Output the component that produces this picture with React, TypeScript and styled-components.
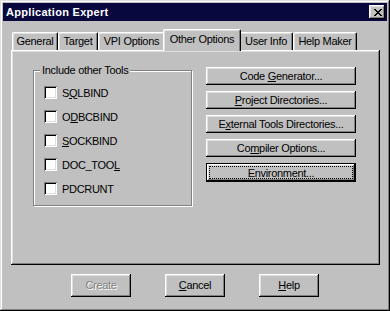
import React from "react";
import styled, { createGlobalStyle } from "styled-components";

const GlobalStyle = createGlobalStyle`
	html, body {
		margin: 0;
		padding: 0;
		background: #c0c0c0;
	}
	body {
		font-family: "Liberation Sans", Arial, sans-serif;
		font-size: 11px;
		color: #000;
	}
	u {
		text-underline-offset: 1px;
	}
`;

const bevel = `
	box-shadow: inset -1px -1px #000, inset 1px 1px #fff, inset -2px -2px #808080,
		inset 2px 2px #dfdfdf;
`;

const tabs = [
	{ label: "General", width: 46 },
	{ label: "Target", width: 40 },
	{ label: "VPI Options", width: 67 },
	{ label: "Other Options", width: 74, active: true },
	{ label: "User Info", width: 54 },
	{ label: "Help Maker", width: 64 },
];

const tools: { label: React.ReactNode }[] = [
	{ label: <>S<u>Q</u>LBIND</> },
	{ label: <>O<u>D</u>BCBIND</> },
	{ label: <><u>S</u>OCKBIND</> },
	{ label: <>DOC_TOO<u>L</u></> },
	{ label: <>PDCRUNT</> },
];

const App = () => {
	return (
		<>
			<GlobalStyle />
			<Window>
				<TitleBar>
					<TitleText>Application Expert</TitleText>
					<CloseButton>
						<svg width="8" height="7" viewBox="0 0 8 7" shapeRendering="crispEdges">
							<path
								d="M0 0h2v1H0zM6 0h2v1H6zM1 1h2v1H1zM5 1h2v1H5zM2 2h4v1H2zM3 3h2v1H3zM2 4h4v1H2zM1 5h2v1H1zM5 5h2v1H5zM0 6h2v1H0zM6 6h2v1H6z"
								fill="#000"
							/>
						</svg>
					</CloseButton>
				</TitleBar>

				<TabStrip>
					{tabs.map((t) => (
						<Tab key={t.label} $w={t.width} $active={t.active}>
							{t.label}
						</Tab>
					))}
				</TabStrip>

				<Panel>
					<GroupBox>
						<Legend>Include other Tools</Legend>
						{tools.map((t, i) => (
							<CheckRow key={i}>
								<CheckBox />
								<span>{t.label}</span>
							</CheckRow>
						))}
					</GroupBox>

					<ButtonColumn>
						<PushButton $h={18}>
							<span>Code <u>G</u>enerator...</span>
						</PushButton>
						<PushButton $h={18}>
							<span><u>P</u>roject Directories...</span>
						</PushButton>
						<PushButton $h={18}>
							<span>E<u>x</u>ternal Tools Directories...</span>
						</PushButton>
						<PushButton $h={18}>
							<span>Co<u>m</u>piler Options...</span>
						</PushButton>
						<PushButton $h={19} $default>
							<FocusRing>Environment...</FocusRing>
						</PushButton>
					</ButtonColumn>
				</Panel>

				<BottomRow>
					<PushButton $w={60} $h={23} $disabled>
						<span>Create</span>
					</PushButton>
					<PushButton $w={60} $h={23}>
						<span><u>C</u>ancel</span>
					</PushButton>
					<PushButton $w={60} $h={23}>
						<span><u>H</u>elp</span>
					</PushButton>
				</BottomRow>
			</Window>
		</>
	);
};

const Window = styled.div`
	width: 390px;
	height: 311px;
	box-sizing: border-box;
	padding: 3px;
	background: #c0c0c0;
	box-shadow: inset -1px -1px #000, inset 1px 1px #dfdfdf, inset -2px -2px #808080,
		inset 2px 2px #fff;
	display: flex;
	flex-direction: column;
`;

const TitleBar = styled.div`
	height: 18px;
	background: #08083e;
	display: flex;
	align-items: center;
	justify-content: space-between;
	padding: 0 2px 0 3px;
`;

const TitleText = styled.span`
	color: #fff;
	font-weight: bold;
	font-size: 11px;
	letter-spacing: 0.3px;
`;

const CloseButton = styled.div`
	width: 16px;
	height: 14px;
	background: #c0c0c0;
	${bevel}
	display: flex;
	align-items: center;
	justify-content: center;
	padding-left: 1px;
	box-sizing: border-box;
`;

const TabStrip = styled.div`
	display: flex;
	align-items: flex-end;
	height: 21px;
	margin: 8px 0 0 9px;
`;

const Tab = styled.div<{ $w: number; $active?: boolean }>`
	position: relative;
	z-index: ${(p) => (p.$active ? 1 : 0)};
	box-sizing: border-box;
	width: ${(p) => (p.$active ? p.$w + 4 : p.$w)}px;
	height: ${(p) => (p.$active ? 22 : 18)}px;
	margin: 0 ${(p) => (p.$active ? -2 : 0)}px ${(p) => (p.$active ? -1 : 0)}px;
	padding-bottom: ${(p) => (p.$active ? 4 : 1)}px;
	background: #c0c0c0;
	border-top: 1px solid #fff;
	border-left: 1px solid #fff;
	border-right: 1px solid #000;
	border-radius: 2px 2px 0 0;
	box-shadow: inset -1px 0 #808080, inset 1px 1px #dfdfdf;
	display: flex;
	align-items: center;
	justify-content: center;
	letter-spacing: -0.3px;
	white-space: nowrap;
`;

const Panel = styled.div`
	box-sizing: border-box;
	width: 369px;
	height: 215px;
	margin-left: 8px;
	${bevel}
	display: flex;
	align-items: flex-start;
	gap: 14px;
	padding: 17px 0 0 22px;
`;

const GroupBox = styled.div`
	position: relative;
	box-sizing: border-box;
	width: 159px;
	height: 136px;
	margin-top: 3px;
	border: 1px solid #808080;
	box-shadow: inset 1px 1px #fff, 1px 1px #fff;
	padding: 15px 0 0 10px;
	display: flex;
	flex-direction: column;
	gap: 11px;
`;

const Legend = styled.span`
	position: absolute;
	top: -7px;
	left: 6px;
	padding: 0 2px;
	line-height: 13px;
	background: #c0c0c0;
	letter-spacing: -0.3px;
`;

const CheckRow = styled.div`
	display: flex;
	align-items: center;
	gap: 5px;
	height: 13px;
	letter-spacing: -0.3px;
`;

const CheckBox = styled.span`
	width: 13px;
	height: 13px;
	flex: none;
	background: #fff;
	box-shadow: inset 1px 1px #808080, inset -1px -1px #fff, inset 2px 2px #000,
		inset -2px -2px #dfdfdf;
`;

const ButtonColumn = styled.div`
	display: flex;
	flex-direction: column;
	gap: 6px;
	width: 150px;
`;

const PushButton = styled.button<{
	$w?: number;
	$h: number;
	$default?: boolean;
	$disabled?: boolean;
}>`
	box-sizing: border-box;
	width: ${(p) => (p.$w ? `${p.$w}px` : "100%")};
	height: ${(p) => p.$h}px;
	margin: 0;
	padding: 0 0 1px;
	border: ${(p) => (p.$default ? "1px solid #000" : "none")};
	background: #c0c0c0;
	${bevel}
	font-family: "Liberation Sans", Arial, sans-serif;
	font-size: 11px;
	letter-spacing: -0.3px;
	color: ${(p) => (p.$disabled ? "#808080" : "#000")};
	text-shadow: ${(p) => (p.$disabled ? "1px 1px #fff" : "none")};
	display: flex;
	align-items: center;
	justify-content: center;
	white-space: nowrap;
`;

const FocusRing = styled.span`
	flex: 1;
	align-self: stretch;
	margin: 2px 2px 1px;
	border: 1px dotted #000;
	display: flex;
	align-items: center;
	justify-content: center;
`;

const BottomRow = styled.div`
	display: flex;
	justify-content: center;
	gap: 34px;
	margin-top: 9px;
`;

export default App;
